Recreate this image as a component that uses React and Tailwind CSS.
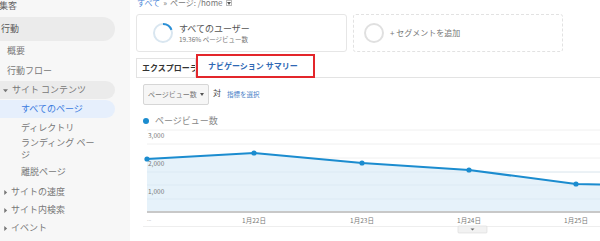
import React from 'react';

const jp = { fontFamily: '"Noto Sans CJK JP", "Noto Sans", sans-serif' };

function Caret({ down }) {
    return (
        <svg width="5" height="5" viewBox="0 0 6 6" className="shrink-0">
            {down ? <path d="M0 1.5 L6 1.5 L3 5 Z" fill="#777" /> : <path d="M1.5 0 L5 3 L1.5 6 Z" fill="#777" />}
        </svg>
    );
}

function Sidebar() {
    return (
        <div className="w-[130px] shrink-0 bg-[#f7f7f7] text-[9px] text-[#777] flex flex-col">
            <div className="h-[12px] flex items-center -ml-[1px] text-[#666]">集客</div>
            <div className="mt-[5px] h-[24px] w-[115px] rounded-r-full bg-[#ebebeb] flex items-center pl-[1px] text-[#555]">行動</div>
            <div className="h-[20px] flex items-center pl-[7px]">概要</div>
            <div className="h-[19px] flex items-center pl-[7px]">行動フロー</div>
            <div className="mt-[1px] h-[18px] w-[115px] rounded-r-full bg-[#ebebeb] flex items-center pl-[3px] gap-[4px]">
                <Caret down />
                <span>サイト コンテンツ</span>
            </div>
            <div className="mt-[1px] h-[18px] w-[115px] rounded-r-full bg-[#e6effc] flex items-center pl-[21px] text-[#3b7be0]">すべてのページ</div>
            <div className="mt-[1px] h-[18px] flex items-center pl-[21px]">ディレクトリ</div>
            <div className="pl-[21px] leading-[12px]">ランディング ペー<br />ジ</div>
            <div className="h-[22px] flex items-center pl-[21px]">離脱ページ</div>
            {['サイトの速度', 'サイト内検索', 'イベント'].map((t) => (
                <div key={t} className="h-[18px] flex items-center pl-[3px] gap-[3px]">
                    <Caret />
                    <span>{t}</span>
                </div>
            ))}
        </div>
    );
}

function Ring({ pct, color, track }) {
    const r = 9;
    const c = 2 * Math.PI * r;
    return (
        <svg width="22" height="22" viewBox="0 0 22 22" className="shrink-0">
            <circle cx="11" cy="11" r={r} fill="none" stroke={track} strokeWidth="2" />
            {pct > 0 && (
                <circle
                    cx="11" cy="11" r={r} fill="none" stroke={color} strokeWidth="2"
                    strokeDasharray={`${c * pct} ${c}`} transform="rotate(-90 11 11)"
                />
            )}
        </svg>
    );
}

function Chart() {
    const pts = [[11, 33], [118, 27], [226, 37], [333, 44], [440, 58], [464, 58.5]];
    const line = pts.map((p) => p.join(',')).join(' ');
    const area = `11,86 ${line} 464,86`;
    const grid = [4, 18, 32, 46, 59, 73];
    const yLabels = [['3,000', 11.5], ['2,000', 39.5], ['1,000', 67.5]];
    const xLabels = [['1月22日', 118], ['1月23日', 226], ['1月24日', 333], ['1月25日', 440]];
    return (
        <svg width="464" height="112" viewBox="0 0 464 112" className="block" style={jp}>
            {grid.map((y) => (
                <line key={y} x1="11" x2="464" y1={y} y2={y} stroke="#f0f0f0" strokeWidth="1" />
            ))}
            <polygon points={area} fill="#e6f2fa" />
            {grid.slice(3).map((y) => (
                <line key={'g' + y} x1="11" x2="464" y1={y} y2={y} stroke="#d9e8f2" strokeWidth="0.8" />
            ))}
            {yLabels.map(([t, y]) => (
                <text key={t} x="12" y={y} fontSize="6.5" fill="#777">{t}</text>
            ))}
            <line x1="11" x2="464" y1="86" y2="86" stroke="#c8c8c8" strokeWidth="2" />
            <polyline points={line} fill="none" stroke="#1b8ccf" strokeWidth="2" strokeLinejoin="round" />
            {pts.slice(0, 5).map(([x, y]) => (
                <circle key={x} cx={x} cy={y} r="2.6" fill="#1b8ccf" />
            ))}
            <text x="11" y="95" fontSize="5" fill="#bbb">...</text>
            {xLabels.map(([t, x]) => (
                <text key={t} x={x} y="96.5" fontSize="6.5" fill="#777" textAnchor="middle">{t}</text>
            ))}
            <line x1="7" x2="464" y1="100.5" y2="100.5" stroke="#eeeeee" strokeWidth="1" />
            <rect x="322" y="100" width="29" height="7" rx="1" fill="#f2f2f2" stroke="#d8d8d8" strokeWidth="0.6" />
            <path d="M334.5 102.5 L338.5 102.5 L336.5 104.5 Z" fill="#666" />
        </svg>
    );
}

export default function App() {
    return (
        <div className="w-[600px] h-[241px] overflow-hidden flex bg-white" style={jp}>
            <Sidebar />
            <div className="flex-1 pl-[6px] flex flex-col min-w-0">
                {/* breadcrumb */}
                <div className="h-[14px] -mt-[4px] flex items-center pl-[1px] text-[8px] text-[#777] gap-[3px]">
                    <span className="text-[#4a86d8]">すべて</span>
                    <span>»</span>
                    <span>ページ: /home</span>
                    <span className="w-[6px] h-[6px] border border-[#bbb] flex items-center justify-center">
                        <svg width="4" height="3" viewBox="0 0 4 3"><path d="M0 0 L4 0 L2 3 Z" fill="#555" /></svg>
                    </span>
                </div>

                {/* segments */}
                <div className="mt-[4px] h-[38px] flex gap-[6px] shrink-0">
                    <div className="w-[211px] border border-[#e6e6e6] rounded-[3px] flex items-center pl-[15px] gap-[5px]">
                        <Ring pct={0.1936} color="#2a8fd6" track="#d9e6f0" />
                        <div className="flex flex-col leading-none">
                            <span className="text-[9px] text-[#555]">すべてのユーザー</span>
                            <span className="text-[6.5px] text-[#777] mt-[3px]">19.36% ページビュー数</span>
                        </div>
                    </div>
                    <div className="w-[210px] border border-dashed border-[#e2e2e2] rounded-[3px] flex items-center pl-[9px] gap-[5px]">
                        <Ring pct={0} color="#ccc" track="#e0e0e0" />
                        <span className="text-[8px] text-[#777]">+ セグメントを追加</span>
                    </div>
                </div>

                {/* tabs */}
                <div className="h-[26px] shrink-0 flex items-end border-b border-[#e3e3e3]">
                    <div className="h-[19px] w-[60px] overflow-hidden whitespace-nowrap border border-b-0 border-[#e3e3e3] bg-white flex items-center pl-[5px] text-[8px] font-bold text-[#333]">
                        エクスプローラ
                    </div>
                    <div className="h-[24px] w-[119px] -mb-[1px] whitespace-nowrap border-2 border-[#e3262b] flex items-center pl-[10px] text-[8px] font-bold text-[#2f68b4]">
                        ナビゲーション サマリー
                    </div>
                </div>

                {/* controls */}
                <div className="mt-[6px] pl-[7px] flex items-center gap-[4px] shrink-0">
                    <div className="h-[21px] w-[66px] border border-[#d6d6d6] rounded-[2px] bg-[#f6f6f6] flex items-center pl-[4px] justify-between pr-[4px] text-[7px] text-[#777]">
                        <span>ページビュー数</span>
                        <svg width="4" height="3" viewBox="0 0 4 3"><path d="M0 0 L4 0 L2 3 Z" fill="#555" /></svg>
                    </div>
                    <span className="text-[8px] text-[#444] -mt-[3px]">対</span>
                    <span className="text-[6.5px] text-[#4a7fc7] ml-[2px]">指標を選択</span>
                </div>

                {/* legend */}
                <div className="mt-[11px] h-[10px] pl-[7px] flex items-center gap-[6px] shrink-0">
                    <span className="w-[6px] h-[6px] rounded-full bg-[#1b8ccf]" />
                    <span className="text-[9px] text-[#888]">ページビュー数</span>
                </div>

                <div className="shrink-0">
                    <Chart />
                </div>
            </div>
        </div>
    );
}
